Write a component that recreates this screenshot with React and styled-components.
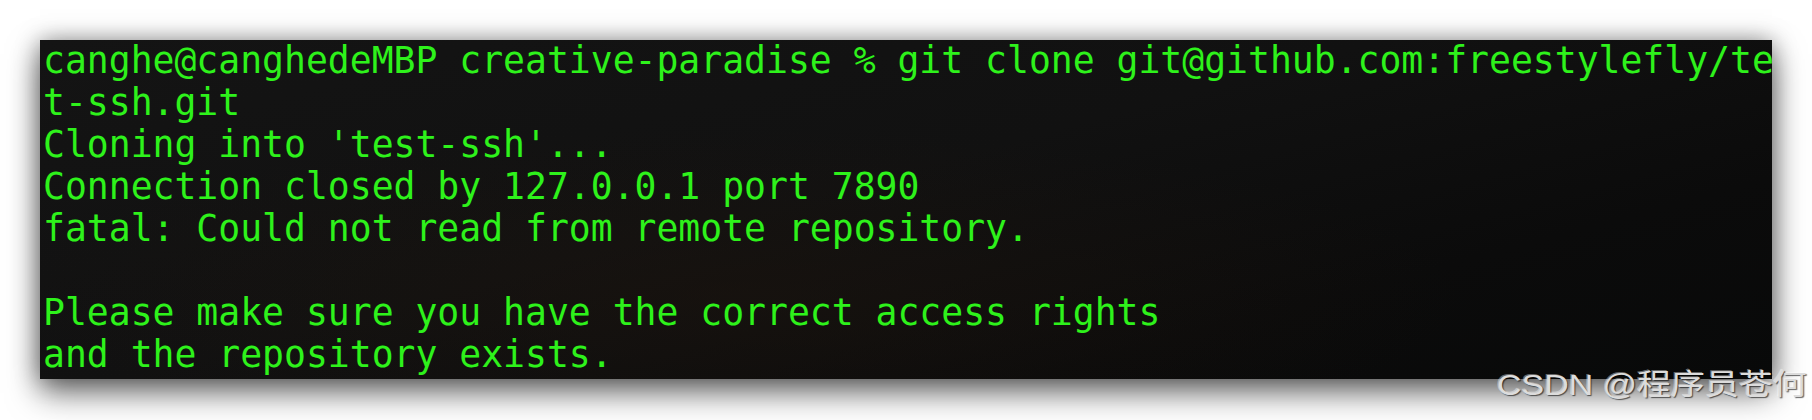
import React from "react";
import styled, { createGlobalStyle } from "styled-components";

const Global = createGlobalStyle`
  html, body {
    margin: 0;
    padding: 0;
    background: #ffffff;
  }
  #root {
    width: 1812px;
    height: 420px;
    overflow: hidden;
  }
`;

const Page = styled.div`
  position: relative;
  width: 1812px;
  height: 420px;
  background: #ffffff;
  padding: 40px 40px 0 40px;
  box-sizing: border-box;
`;

const Terminal = styled.div`
  width: 1732px;
  height: 339px;
  box-sizing: border-box;
  padding: 0 0 0 3px;
  overflow: hidden;
  background:
    radial-gradient(ellipse 60% 70% at 40% 75%, rgba(28, 20, 14, 0.55), rgba(0, 0, 0, 0) 70%),
    linear-gradient(165deg, #141414 0%, #111111 45%, #0b0b0b 75%, #080909 100%);
  box-shadow:
    0 14px 30px rgba(0, 0, 0, 0.55),
    0 0 22px rgba(0, 0, 0, 0.35);
  display: flex;
  flex-direction: column;
`;

const Line = styled.div`
  font-family: "DejaVu Sans Mono", "Liberation Mono", monospace;
  font-size: 36.4px;
  line-height: 42px;
  height: 42px;
  color: #2ef21b;
  white-space: pre;
`;

const Watermark = styled.div`
  position: absolute;
  right: 5px;
  top: 367px;
  font-family: "Liberation Sans", "Noto Sans CJK SC", sans-serif;
  font-size: 29px;
  line-height: 36px;
  color: #dcdcdc;
  text-shadow: 1px 1px 1px rgba(0, 0, 0, 0.6), -1px -1px 0 rgba(255, 255, 255, 0.4);
  transform: scaleX(1.17);
  transform-origin: right center;
  white-space: nowrap;
`;

const lines = [
  "canghe@canghedeMBP creative-paradise % git clone git@github.com:freestylefly/te",
  "t-ssh.git",
  "Cloning into 'test-ssh'...",
  "Connection closed by 127.0.0.1 port 7890",
  "fatal: Could not read from remote repository.",
  "",
  "Please make sure you have the correct access rights",
  "and the repository exists.",
];

export default function App() {
  return (
    <>
      <Global />
      <Page>
        <Terminal>
          {lines.map((l, i) => (
            <Line key={i}>{l}</Line>
          ))}
        </Terminal>
        <Watermark>CSDN @程序员苍何</Watermark>
      </Page>
    </>
  );
}
